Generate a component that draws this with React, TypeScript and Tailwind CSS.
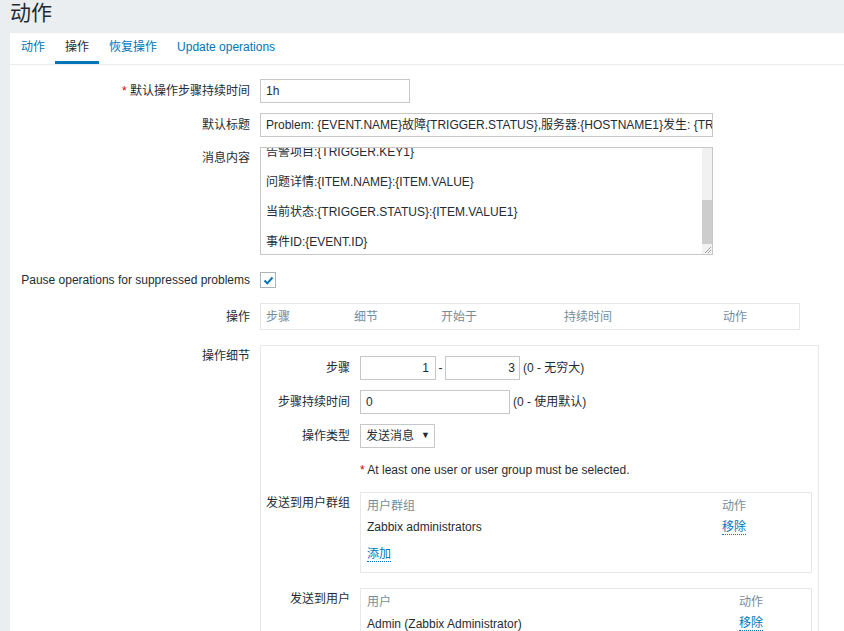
import React from "react";

const Link = ({ children }: { children: React.ReactNode }) => (
  <span className="text-[#0275b8] border-b border-dotted border-[#0275b8] leading-[14px] inline-block">{children}</span>
);

export default function App() {
  const msgLines = [
    "告警项目:{TRIGGER.KEY1}",
    "",
    "问题详情:{ITEM.NAME}:{ITEM.VALUE}",
    "",
    "当前状态:{TRIGGER.STATUS}:{ITEM.VALUE1}",
    "",
    "事件ID:{EVENT.ID}",
    "",
    "",
  ];
  return (
    <div className="w-[844px] h-[631px] overflow-hidden bg-[#ebeef0] font-['Liberation_Sans','Noto_Sans_CJK_SC',sans-serif] text-[12px] text-[#1f2c33] flex flex-col">
      <div className="h-[33px] shrink-0 pl-[10px] text-[21px] leading-[25px]">动作</div>
      <div className="ml-[10px] flex-1 bg-white">
        {/* tabs */}
        <div className="flex h-[32px] border-b border-[#ebeef0] pl-[1px]">
          <div className="px-[10px] leading-[28px] border-b-[3px] border-transparent text-[#0275b8]">动作</div>
          <div className="px-[10px] leading-[28px] border-b-[3px] border-[#0275b8]">操作</div>
          <div className="px-[10px] leading-[28px] border-b-[3px] border-transparent text-[#0275b8]">恢复操作</div>
          <div className="px-[10px] leading-[28px] border-b-[3px] border-transparent text-[#0275b8]">Update operations</div>
        </div>

        <div className="pt-[14px]">
          {/* row 1 */}
          <div className="flex items-center h-[24px]">
            <div className="w-[250px] pr-[10px] text-right shrink-0">
              <span className="text-[#d40000]">*</span> 默认操作步骤持续时间
            </div>
            <div className="w-[150px] h-[24px] border border-[#c7c7c7] px-[5px] leading-[22px]">1h</div>
          </div>
          {/* row 2 */}
          <div className="flex items-center h-[24px] mt-[10px]">
            <div className="w-[250px] pr-[10px] text-right shrink-0">默认标题</div>
            <div className="w-[453px] h-[24px] border border-[#c7c7c7] px-[5px] leading-[22px] overflow-hidden whitespace-nowrap">
              Problem: {"{EVENT.NAME}"}故障{"{TRIGGER.STATUS}"},服务器:{"{HOSTNAME1}"}发生: {"{TRIGGER.NAME}"}故障!
            </div>
          </div>
          {/* row 3 textarea */}
          <div className="flex items-start mt-[10px]">
            <div className="w-[250px] pr-[10px] text-right shrink-0 pt-[4px] leading-[15px]">消息内容</div>
            <div className="w-[453px] h-[108px] border border-[#c7c7c7] relative overflow-hidden">
              <div className="pl-[5px] pr-[16px] -mt-[3px] leading-[15px] whitespace-pre">
                {msgLines.map((l, i) => (
                  <div key={i} className="h-[15px]">{l}</div>
                ))}
              </div>
              <div className="absolute right-0 top-0 bottom-0 w-[10px] bg-[#f1f1f1]">
                <div className="absolute left-0 right-0 top-[52px] h-[44px] bg-[#cdcdcd]" />
                <div className="absolute right-0 bottom-0 w-[10px] h-[10px] bg-[#f1f1f1]">
                  <svg width="10" height="10" viewBox="0 0 10 10">
                    <path d="M3 9 L9 3 M6 9 L9 6" stroke="#9a9a9a" strokeWidth="1" />
                  </svg>
                </div>
              </div>
            </div>
          </div>
          {/* row 4 checkbox */}
          <div className="flex items-center h-[24px] mt-[13px]">
            <div className="w-[250px] pr-[10px] text-right shrink-0 whitespace-nowrap">Pause operations for suppressed problems</div>
            <div className="w-[16px] h-[16px] border border-[#aab4ba] flex items-center justify-center">
              <svg width="11" height="11" viewBox="0 0 11 11">
                <path d="M1.5 5.5 L4.3 8.3 L9.5 2.5" stroke="#0275b8" strokeWidth="2" fill="none" />
              </svg>
            </div>
          </div>
          {/* row 5 operations table */}
          <div className="flex items-center mt-[11px]">
            <div className="w-[250px] pr-[10px] text-right shrink-0">操作</div>
            <div className="w-[540px] h-[27px] border border-[#e8e8e8] flex items-center pl-[5px] text-[#768d99]">
              <div className="w-[88px]">步骤</div>
              <div className="w-[87px]">细节</div>
              <div className="w-[123px]">开始于</div>
              <div className="w-[159px]">持续时间</div>
              <div>动作</div>
            </div>
          </div>
          {/* row 6 details */}
          <div className="flex items-start mt-[15px]">
            <div className="w-[250px] pr-[10px] text-right shrink-0 pt-[4px] leading-[15px]">操作细节</div>
            <div className="w-[559px] border border-[#e8e8e8] pt-[10px] pb-[20px]">
              {/* steps */}
              <div className="flex items-center h-[24px]">
                <div className="w-[99px] pr-[10px] text-right shrink-0">步骤</div>
                <div className="w-[76px] h-[24px] border border-[#c7c7c7] pr-[6px] text-right leading-[22px]">1</div>
                <div className="w-[9px] text-center">-</div>
                <div className="w-[75px] h-[24px] border border-[#c7c7c7] pr-[4px] text-right leading-[22px]">3</div>
                <div className="ml-[3px]">(0 - 无穷大)</div>
              </div>
              <div className="flex items-center h-[24px] mt-[10px]">
                <div className="w-[99px] pr-[10px] text-right shrink-0">步骤持续时间</div>
                <div className="w-[150px] h-[24px] border border-[#c7c7c7] px-[5px] leading-[22px]">0</div>
                <div className="ml-[3px]">(0 - 使用默认)</div>
              </div>
              <div className="flex items-center h-[24px] mt-[10px]">
                <div className="w-[99px] pr-[10px] text-right shrink-0">操作类型</div>
                <div className="w-[75px] h-[24px] border border-[#c7c7c7] pl-[5px] pr-[4px] flex items-center justify-between">
                  <span>发送消息</span>
                  <span className="text-[9px]">▼</span>
                </div>
              </div>
              <div className="flex items-center h-[24px] mt-[10px]">
                <div className="w-[99px] shrink-0" />
                <div>
                  <span className="text-[#d40000]">*</span> At least one user or user group must be selected.
                </div>
              </div>
              {/* user groups */}
              <div className="flex items-start mt-[10px]">
                <div className="w-[99px] pr-[10px] text-right shrink-0 pt-[4px] leading-[15px] whitespace-nowrap">发送到用户群组</div>
                <div className="w-[452px] border border-[#e8e8e8] px-[6px] pt-[3px] pb-[7px]">
                  <div className="flex h-[20px] leading-[20px] text-[#768d99]">
                    <div className="w-[355px]">用户群组</div>
                    <div>动作</div>
                  </div>
                  <div className="flex h-[22px] items-center">
                    <div className="w-[355px]">Zabbix administrators</div>
                    <Link>移除</Link>
                  </div>
                  <div className="flex h-[22px] items-center mt-[5px]">
                    <Link>添加</Link>
                  </div>
                </div>
              </div>
              {/* users */}
              <div className="flex items-start mt-[15px]">
                <div className="w-[99px] pr-[10px] text-right shrink-0 pt-[4px] leading-[15px]">发送到用户</div>
                <div className="w-[452px] border border-[#e8e8e8] px-[6px] pt-[3px] pb-[8px]">
                  <div className="flex h-[20px] leading-[20px] text-[#768d99]">
                    <div className="w-[372px]">用户</div>
                    <div>动作</div>
                  </div>
                  <div className="flex h-[23px] items-center">
                    <div className="w-[372px]">Admin (Zabbix Administrator)</div>
                    <Link>移除</Link>
                  </div>
                  <div className="flex h-[22px] items-center mt-[5px]">
                    <Link>添加</Link>
                  </div>
                </div>
              </div>
            </div>
          </div>
        </div>
      </div>
    </div>
  );
}
